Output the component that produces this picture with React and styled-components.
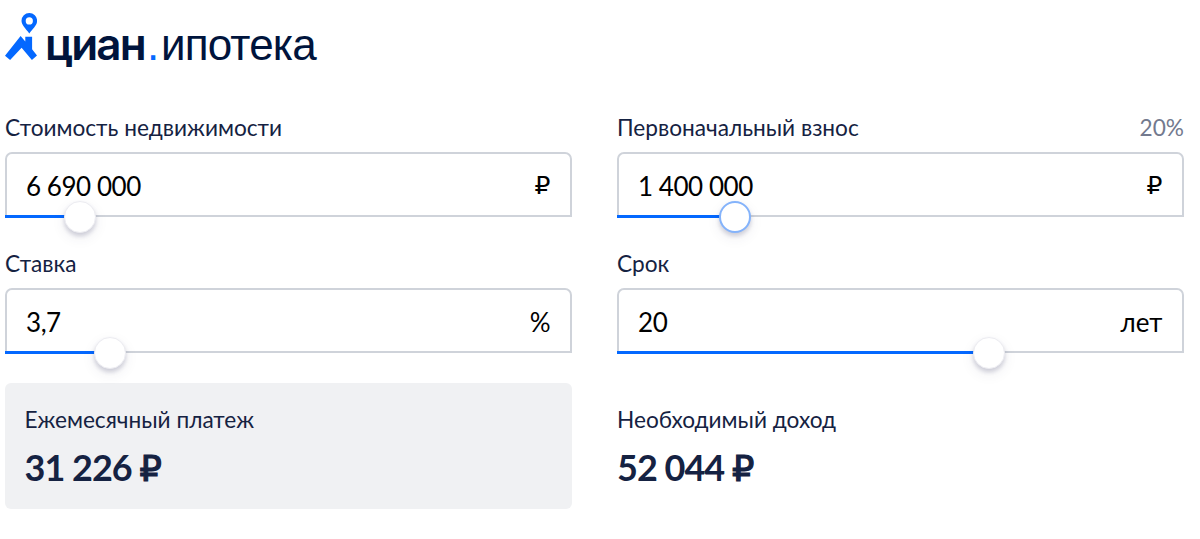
import React from "react"
import styled, { createGlobalStyle } from "styled-components"

const GlobalStyle = createGlobalStyle`
  * {
    box-sizing: border-box;
  }
  body {
    margin: 0;
    background: #fff;
    color: #152242;
    font-family: Lato, "Liberation Sans", sans-serif;
  }
`

const Page = styled.main`
  height: 539px;
  padding: 12px 16px 0 5px;
  overflow: hidden;
`
const Logo = styled.header`
  display: flex;
  height: 101px;
`
const LogoIcon = styled.svg`
  flex: none;
  width: 32px;
  height: 49px;
`
const LogoText = styled.div`
  display: flex;
  align-items: baseline;
  margin: 6px 0 0 8px;
  font: 44px/52px "Liberation Sans", Arial, sans-serif;
  color: #00143c;
`
const Brand = styled.span`
  width: 102px;
  font-family: Inter, "Liberation Sans", sans-serif;
  font-weight: 600;
  letter-spacing: -1.8px;
`
const Dot = styled.span`
  width: 14px;
  color: #0468ff;
`
const Product = styled.span`
  letter-spacing: -0.85px;
`
const Grid = styled.div`
  display: grid;
  grid-template-columns: 567px 567px;
  column-gap: 45px;
`
const Field = styled.div`
  height: 136px;
`
const FieldHead = styled.div`
  display: flex;
  justify-content: space-between;
  height: 39px;
  font-size: 22.65px;
  line-height: 30px;
`
const Percent = styled.span`
  color: #737a8e;
`
const InputBox = styled.div`
  position: relative;
  display: flex;
  align-items: center;
  justify-content: space-between;
  height: 65px;
  padding: 2px 19.5px 0 19px;
  border: 2px solid #cfd3da;
  border-radius: 7px 7px 0 0;
  font-size: 26px;
  line-height: 32px;
  color: #000;
`
const Value = styled.span`
  letter-spacing: -0.45px;
`
const Rouble = styled.span`
  font-family: "DejaVu Sans", sans-serif;
  font-size: ${props => (props.$bold ? "35px" : "25px")};
  font-weight: normal;
  line-height: 1;
  letter-spacing: 0;
  -webkit-text-stroke: ${props => (props.$bold ? "1.2px" : "0")};
`
const Track = styled.div`
  position: absolute;
  left: -2px;
  bottom: -3px;
  height: 3px;
  background: #0468ff;
`
const Knob = styled.div`
  position: absolute;
  right: -16px;
  top: -14.5px;
  width: 32px;
  height: 32px;
  border: ${props => (props.$active ? "2px solid #84b3fb" : "1px solid #ececf1")};
  border-radius: 50%;
  background: #fff;
  box-shadow: 0 3px 4px rgba(50, 50, 93, 0.2), 0 5px 14px rgba(50, 50, 93, 0.08);
`
const Result = styled.div`
  height: 126px;
  margin-top: -2px;
  padding: 21px 0 0 ${props => (props.$filled ? "19.5px" : "0")};
  border-radius: 6px;
  background: ${props => (props.$filled ? "#f0f1f3" : "transparent")};
`
const ResultTitle = styled.div`
  font-size: 22.65px;
  line-height: 31px;
`
const ResultValue = styled.div`
  margin-top: 10px;
  font-size: 36px;
  font-weight: bold;
  line-height: 44px;
  letter-spacing: -1px;
`

const fields = [
  { label: "Стоимость недвижимости", value: "6 690 000", unit: "₽", fill: 74.5 },
  { label: "Первоначальный взнос", value: "1 400 000", unit: "₽", fill: 118, note: "20%", active: true },
  { label: "Ставка", value: "3,7", unit: "%", fill: 105 },
  { label: "Срок", value: "20", unit: "лет", fill: 371.5 },
]

const SliderField = ({ label, value, unit, fill, note, active }) => (
  <Field>
    <FieldHead>
      <span>{label}</span>
      {note && <Percent>{note}</Percent>}
    </FieldHead>
    <InputBox>
      <Value>{value}</Value>
      {unit === "₽" ? <Rouble>₽</Rouble> : <span>{unit}</span>}
      <Track style={{ width: fill }}>
        <Knob $active={active} />
      </Track>
    </InputBox>
  </Field>
)

const App = () => (
  <Page>
    <GlobalStyle />
    <Logo>
      <LogoIcon viewBox="0 0 32 49" fill="#0468ff">
        <path
          fillRule="evenodd"
          d="M24.3 1a7.8 7.8 0 0 0-7.8 7.8c0 4.4 4 7.6 7.8 12.700c3.800-5.100 7.800-8.300 7.800-12.700a7.800 7.800 0 0 0-7.800-7.800zm0 4.300a3.600 3.600 0 1 1 0 7.200a3.600 3.600 0 0 1 0-7.200z"
        />
        <path d="M0 43.700 15.600 24l4.700 5.500V24.800h6.800v12.400l4.900 6.300-5.100 4.400-10.300-12.200L5.100 47.900z" />
      </LogoIcon>
      <LogoText>
        <Brand>циан</Brand>
        <Dot>.</Dot>
        <Product>ипотека</Product>
      </LogoText>
    </Logo>
    <Grid>
      {fields.map(field => (
        <SliderField key={field.label} {...field} />
      ))}
      <Result $filled>
        <ResultTitle>Ежемесячный платеж</ResultTitle>
        <ResultValue>
          31 226 <Rouble $bold>₽</Rouble>
        </ResultValue>
      </Result>
      <Result>
        <ResultTitle>Необходимый доход</ResultTitle>
        <ResultValue>
          52 044 <Rouble $bold>₽</Rouble>
        </ResultValue>
      </Result>
    </Grid>
  </Page>
)

export default App
